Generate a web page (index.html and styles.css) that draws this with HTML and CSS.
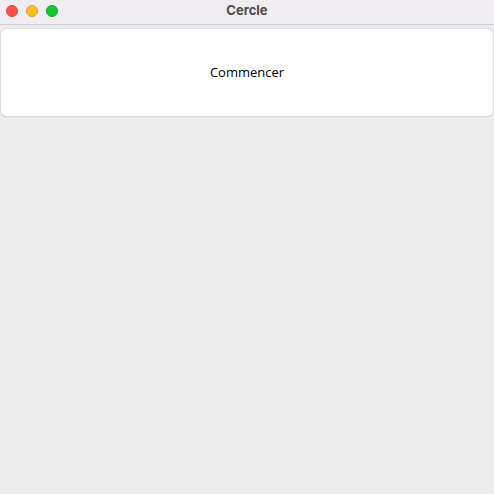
FILE: index.html
```html
<!DOCTYPE html>
<html>
<head>
<meta charset="utf-8">
<link rel="stylesheet" href="styles.css">
</head>
<body>
<div class="window">
  <div class="titlebar">
    <div class="lights">
      <span class="light red"></span>
      <span class="light yellow"></span>
      <span class="light green"></span>
    </div>
    <div class="title">Cercle</div>
  </div>
  <div class="content">
    <button class="start">Commencer</button>
  </div>
</div>
</body>
</html>
```
FILE: styles.css
```css
html, body {
  margin: 0;
  padding: 0;
  width: 494px;
  height: 494px;
  overflow: hidden;
  background: #ecebec;
  font-family: "Open Sans", "Noto Sans", sans-serif;
}
.window {
  display: flex;
  flex-direction: column;
  height: 494px;
}
.titlebar {
  position: relative;
  height: 24px;
  background: #efedf1;
  border-bottom: 1px solid #cfcdd0;
  display: flex;
  align-items: center;
  justify-content: center;
}
.lights {
  position: absolute;
  left: 6px;
  top: 5px;
  display: flex;
  gap: 8px;
}
.light {
  width: 12px;
  height: 12px;
  border-radius: 50%;
  box-sizing: border-box;
}
.red { background: #fe4f4a; border: 1px solid #e0443e; }
.yellow { background: #febb2c; border: 1px solid #e0a028; }
.green { background: #18c534; border: 1px solid #13a829; }
.title {
  font-family: "Inter", "Noto Sans", sans-serif;
  font-weight: 700;
  font-size: 13px;
  color: #4d4b4f;
  margin-top: -4px;
}
.content {
  flex: 1;
  padding: 4px 1px 0 1px;
  background: #ededed;
}
.start {
  display: block;
  width: 100%;
  height: 87px;
  background: #ffffff;
  border: none;
  border-radius: 6px;
  box-shadow: 0 0 0 1px #dcdcdc, 0 1px 1px rgba(0,0,0,0.3);
  font-family: "Open Sans", "Noto Sans", sans-serif;
  font-size: 13px;
  color: #000;
  padding: 0 0 2px 0;
}
```
